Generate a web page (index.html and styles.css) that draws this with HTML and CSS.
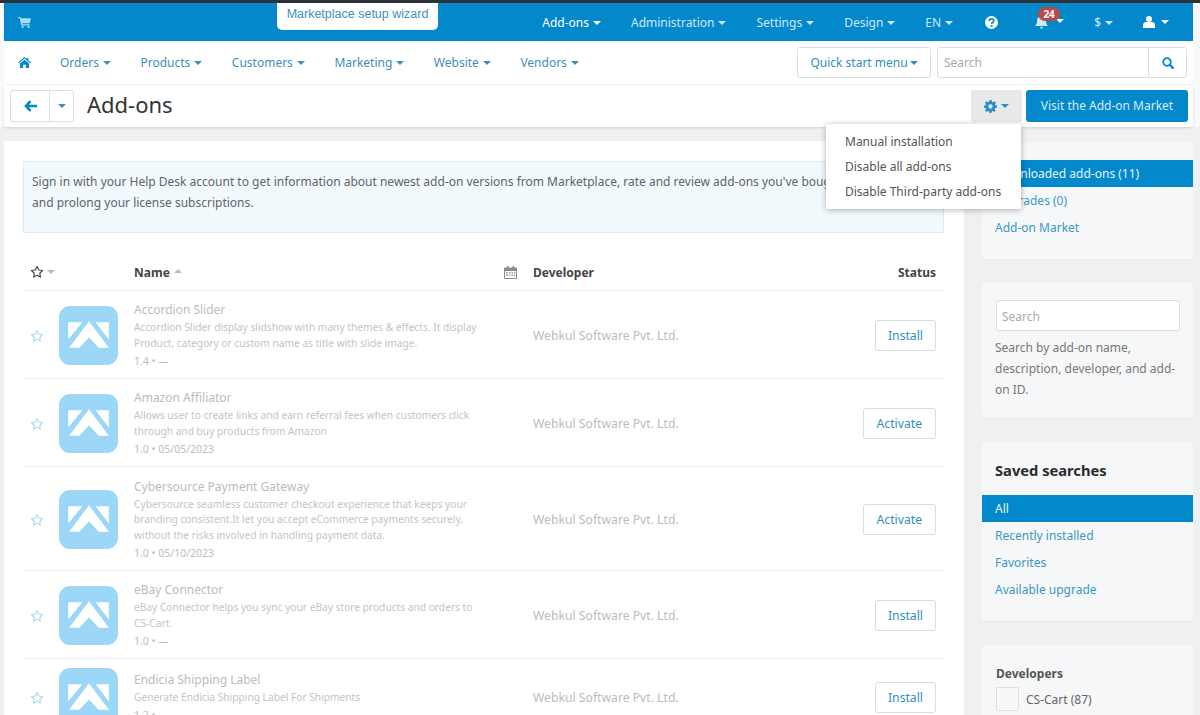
FILE: index.html
```html
<!DOCTYPE html>
<html lang="en">
<head>
<meta charset="utf-8">
<title>Add-ons</title>
<link rel="stylesheet" href="styles.css">
</head>
<body>
<svg class="defs" width="0" height="0" aria-hidden="true">
  <symbol id="logo" viewBox="0 0 58 58">
    <rect width="58" height="58" rx="11" fill="#9dd7f7"/>
    <path fill="#fff" d="M9 16H23L9 33ZM49 16H36L49 33ZM29.500 15L49 41H39L29.500 31L20 41H10Z"/>
  </symbol>
  <symbol id="star" viewBox="0 0 16 16">
    <path fill="none" stroke="currentColor" stroke-width="1.3" stroke-linejoin="round" d="M8 1.6l1.95 4.1 4.45.6-3.25 3.1.8 4.45L8 11.7l-3.95 2.15.8-4.45L1.6 6.3l4.45-.6z"/>
  </symbol>
</svg>

<div class="strip"></div>
<div class="page">
  <header class="topbar">
    <svg class="ic cart" viewBox="0 0 14 12" width="13" height="11"><path fill="currentColor" d="M0 0h2.5l.4 1.4H14l-1.3 5.4H4.4l.3 1.2h8v1.2H3.5L1.7 1.2H0z"/><circle fill="currentColor" cx="5" cy="10.8" r="1.2"/><circle fill="currentColor" cx="11.5" cy="10.8" r="1.2"/></svg>
    <a class="wizard">Marketplace setup wizard</a>
    <nav class="topnav">
      <span class="ti ti-strong caret">Add-ons</span>
      <span class="ti caret">Administration</span>
      <span class="ti caret">Settings</span>
      <span class="ti caret">Design</span>
      <span class="ti caret">EN</span>
      <svg class="ic help" viewBox="0 0 14 14" width="13" height="13"><circle cx="7" cy="7" r="7" fill="currentColor"/><path fill="none" stroke="#0388cc" stroke-width="1.9" d="M4.6 5.4c0-3 4.9-3 4.9-.2 0 1.8-2.4 1.7-2.4 3.4"/><rect x="6.1" y="9.7" width="2" height="2" fill="#0388cc"/></svg>
      <span class="bell-wrap caret">
        <svg class="ic" viewBox="0 0 13 14" width="13" height="14"><path fill="currentColor" d="M6.5 0C7.2 0 7.6.5 7.6 1 10 1.5 11 3.500 11 6c0 2.500.8 3.700 2 5H0c1.200-1.300 2-2.500 2-5 0-2.500 1-4.500 3.400-5C5.400.5 5.800 0 6.500 0zM5 12h3c0 2-3 2-3 0z"/></svg>
        <span class="badge">24</span>
      </span>
      <span class="ti caret">$</span>
      <span class="user caret">
        <svg class="ic" viewBox="0 0 12 12" width="12" height="12"><circle cx="6" cy="3" r="3" fill="currentColor"/><path fill="currentColor" d="M0 12V9c0-2 1.500-3 3-3h6c1.500 0 3 1 3 3v3z"/></svg>
      </span>
    </nav>
  </header>

  <div class="subnav">
    <svg class="ic home" viewBox="0 0 14 12" width="13" height="11"><path fill="currentColor" d="M7 0l2.600 2.200V1H11v2.400L14 6l-.8.9L7 1.700.8 6.900 0 6zM2 7.200L7 3l5 4.200V12H8.500V8.500h-3V12H2z"/></svg>
    <a class="si caret">Orders</a>
    <a class="si caret">Products</a>
    <a class="si caret">Customers</a>
    <a class="si caret">Marketing</a>
    <a class="si caret">Website</a>
    <a class="si caret">Vendors</a>
    <button class="quick caret" type="button">Quick start menu</button>
    <div class="searchbox">
      <span class="searchbox-text">Search</span>
      <span class="searchbox-btn">
        <svg viewBox="0 0 12 12" width="12" height="12"><circle cx="5" cy="5" r="3.800" fill="none" stroke="currentColor" stroke-width="1.800"/><path stroke="currentColor" stroke-width="2.200" stroke-linecap="round" d="M8 8l2.900 2.900"/></svg>
      </span>
    </div>
  </div>

  <div class="titlebar">
    <div class="btngroup">
      <span class="back">
        <svg viewBox="0 0 13 12" width="13" height="12"><path fill="none" stroke="currentColor" stroke-width="2.600" d="M6.500 1.200L2 6l4.500 4.800M2.500 6H13"/></svg>
      </span>
      <span class="back-caret"><i class="tri"></i></span>
    </div>
    <h1 class="title">Add-ons</h1>
    <span class="gear">
      <svg viewBox="0 0 14 14" width="13" height="13"><path fill="currentColor" fill-rule="evenodd" d="M5.800 0h2.400l.3 1.900 1.200.5L11.300 1.300 13 3l-1.100 1.500.5 1.200 1.600.3v2.400l-1.900.3-.5 1.200L12.700 11.300 11 13l-1.500-1.100-1.200.5L8 14H5.800l-.3-1.600-1.200-.5L2.700 13 1 11.300l1.100-1.500-.5-1.200L0 8.300V5.900l1.600-.3.500-1.200L1 3l1.700-1.700 1.600 1.100 1.200-.5zM7 4.700a2.300 2.300 0 1 0 0 4.600 2.300 2.300 0 0 0 0-4.600z"/></svg>
      <i class="tri"></i>
    </span>
    <button class="visit" type="button">Visit the Add-on Market</button>
    <ul class="dropdown">
      <li>Manual installation</li>
      <li>Disable all add-ons</li>
      <li>Disable Third-party add-ons</li>
    </ul>
  </div>

  <div class="content">
    <main class="main">
      <div class="notice">Sign in with your Help Desk account to get information about newest add-on versions from Marketplace, rate and review add-ons you've bought,<br>and prolong your license subscriptions.</div>
      <div class="thead">
        <span class="th-star"><svg class="star-h" width="14" height="14"><use href="#star"/></svg><i class="tri tri-gray"></i></span>
        <span></span>
        <span class="th-name"><b>Name</b><i class="tri-up"></i>
          <svg class="cal" viewBox="0 0 13 13" width="13" height="13"><path fill="#8a8a8a" fill-rule="evenodd" d="M1 1.500h2V0h1.500v1.500h4V0H10v1.500h2a1 1 0 0 1 1 1V12a1 1 0 0 1-1 1H1a1 1 0 0 1-1-1V2.500a1 1 0 0 1 1-1zM1 5v7h11V5z"/><path fill="#a5a5a5" d="M2 6h2v1.500H2zM5 6h1.500v1.500H5zM7.500 6H9v1.500H7.500zM10 6h1.200v1.500H10zM2 8.500h2V10H2zM5 8.500h1.500V10H5zM7.500 8.500H9V10H7.500zM10 8.500h1.200V10H10z"/></svg>
        </span>
        <b>Developer</b>
        <b class="th-status">Status</b>
      </div>

      <div class="row">
        <svg class="star" width="14" height="14"><use href="#star"/></svg>
        <svg class="logo" width="59" height="59"><use href="#logo"/></svg>
        <div class="info">
          <div class="name">Accordion Slider</div>
          <div class="desc">Accordion Slider display slidshow with many themes &amp; effects. It display<br>Product, category or custom name as title with slide image.</div>
          <div class="meta">1.4 • —</div>
        </div>
        <div class="dev">Webkul Software Pvt. Ltd.</div>
        <button class="act" type="button">Install</button>
      </div>

      <div class="row">
        <svg class="star" width="14" height="14"><use href="#star"/></svg>
        <svg class="logo" width="59" height="59"><use href="#logo"/></svg>
        <div class="info">
          <div class="name">Amazon Affiliator</div>
          <div class="desc">Allows user to create links and earn referral fees when customers click<br>through and buy products from Amazon</div>
          <div class="meta">1.0 • 05/05/2023</div>
        </div>
        <div class="dev">Webkul Software Pvt. Ltd.</div>
        <button class="act act-wide" type="button">Activate</button>
      </div>

      <div class="row row-tall">
        <svg class="star" width="14" height="14"><use href="#star"/></svg>
        <svg class="logo" width="59" height="59"><use href="#logo"/></svg>
        <div class="info">
          <div class="name">Cybersource Payment Gateway</div>
          <div class="desc">Cybersource seamless customer checkout experience that keeps your<br>branding consistent.It let you accept eCommerce payments securely,<br>without the risks involved in handling payment data.</div>
          <div class="meta">1.0 • 05/10/2023</div>
        </div>
        <div class="dev">Webkul Software Pvt. Ltd.</div>
        <button class="act act-wide" type="button">Activate</button>
      </div>

      <div class="row">
        <svg class="star" width="14" height="14"><use href="#star"/></svg>
        <svg class="logo" width="59" height="59"><use href="#logo"/></svg>
        <div class="info">
          <div class="name">eBay Connector</div>
          <div class="desc">eBay Connector helps you sync your eBay store products and orders to<br>CS-Cart.</div>
          <div class="meta">1.0 • —</div>
        </div>
        <div class="dev">Webkul Software Pvt. Ltd.</div>
        <button class="act" type="button">Install</button>
      </div>

      <div class="row row-short">
        <svg class="star" width="14" height="14"><use href="#star"/></svg>
        <svg class="logo" width="59" height="59"><use href="#logo"/></svg>
        <div class="info">
          <div class="name">Endicia Shipping Label</div>
          <div class="desc">Generate Endicia Shipping Label For Shipments</div>
          <div class="meta">1.2 • —</div>
        </div>
        <div class="dev">Webkul Software Pvt. Ltd.</div>
        <button class="act" type="button">Install</button>
      </div>
    </main>

    <aside class="side">
      <section class="card card-tabs">
        <a class="li li-active">Downloaded add-ons (11)</a>
        <a class="li">Upgrades (0)</a>
        <a class="li">Add-on Market</a>
      </section>
      <section class="card card-search">
        <div class="side-input">Search</div>
        <p class="side-help">Search by add-on name, description, developer, and add-on ID.</p>
      </section>
      <section class="card card-saved">
        <h2 class="side-h">Saved searches</h2>
        <a class="li li-active">All</a>
        <a class="li">Recently installed</a>
        <a class="li">Favorites</a>
        <a class="li">Available upgrade</a>
      </section>
      <section class="card card-dev">
        <h3 class="side-h3">Developers</h3>
        <label class="check"><span class="box"></span>CS-Cart (87)</label>
      </section>
    </aside>
  </div>
</div>
</body>
</html>
```
FILE: styles.css
```css
* { box-sizing: border-box; }
html, body { margin: 0; padding: 0; height: 715px; overflow: hidden; }
body {
  background: linear-gradient(#f8f9fa 127px, #eef0f2 127px);
  font-family: "Noto Sans", "Open Sans", sans-serif;
  font-size: 12px;
  color: #555;
}
.defs { position: absolute; }
.strip { height: 3px; background: #2c3338; }
.page { margin: 0 7px 0 4px; height: 712px; }
.ic { display: block; flex: none; }
.tri {
  display: inline-block; width: 0; height: 0;
  border-left: 4px solid transparent; border-right: 4px solid transparent;
  border-top: 4px solid currentColor;
}
.tri-gray { color: #bbb; margin-left: 3px; }
.tri-up {
  display: inline-block; width: 0; height: 0; margin-left: 4px; margin-bottom: 2px;
  border-left: 4px solid transparent; border-right: 4px solid transparent;
  border-bottom: 4px solid #bbb;
}
.caret::after {
  content: ""; display: inline-block; width: 0; height: 0; margin-left: 4px; vertical-align: 2px;
  border-left: 4px solid transparent; border-right: 4px solid transparent;
  border-top: 4px solid currentColor;
}

.topbar {
  position: relative; display: flex; align-items: center;
  height: 38px; padding: 0 24px 0 14px; background: #0388cc; color: #cfe9f7;
}
.cart { color: #a9dcf6; }
.wizard {
  position: absolute; left: 273px; top: 0; width: 161px; height: 27px;
  background: #fff; border-radius: 0 0 5px 5px;
  font: 12.500px/23px "Liberation Sans", sans-serif; color: #3f8fc0; text-align: center;
}
.topnav { margin-left: auto; display: flex; align-items: center; gap: 30px; }
.ti { white-space: nowrap; }
.ti-strong { color: #fff; }
.help { color: #fff; margin-left: 2px; margin-right: 7px; }
.bell-wrap { position: relative; display: flex; align-items: center; color: #cfe9f7; }
.bell-wrap::after { margin-left: 8px; margin-top: -2px; color: #fff; }
.badge {
  position: absolute; left: 3px; top: -8px; min-width: 22px; height: 14px; padding: 0 4px;
  background: #b94a48; border-radius: 7px; color: #fff;
  font-size: 10px; font-weight: 700; line-height: 14px; text-align: center;
}
.user { display: flex; align-items: center; color: #fff; }
.user::after { margin-left: 6px; }

.subnav {
  display: flex; align-items: center; height: 44px; padding: 0 6px 0 14px;
  background: #fff; border-bottom: 1px solid #f4f5f6;
}
.home { color: #0388cc; margin-right: 29px; }
.si { color: #3f8fb8; margin-right: 29.500px; white-space: nowrap; }
.si:last-of-type { margin-right: 0; }
.quick {
  margin-left: auto; width: 134px; height: 31px; padding: 0; background: #fff;
  border: 1px solid #dcdfe2; border-radius: 3px; color: #2f8fbd;
  font: inherit; white-space: nowrap;
}
.quick::after { margin-left: 2px; }
.searchbox {
  display: flex; width: 250px; height: 31px; margin-left: 6px;
  border: 1px solid #dcdfe2; border-radius: 3px; background: #fff;
}
.searchbox-text { flex: 1; padding-left: 6px; line-height: 29px; color: #aaa; }
.searchbox-btn {
  width: 38px; display: flex; align-items: center; justify-content: center;
  border-left: 1px solid #dcdfe2; color: #0388cc;
}

.titlebar {
  position: relative; display: flex; align-items: center; height: 42px; padding: 0 5px 0 6px;
  background: #fff; box-shadow: 0 1px 3px rgba(0,0,0,.12); border-radius: 0 0 3px 3px;
}
.btngroup { display: flex; height: 32px; border: 1px solid #dcdfe2; border-radius: 3px; }
.back {
  width: 39px; display: flex; align-items: center; justify-content: center;
  border-right: 1px solid #dcdfe2; color: #0388cc;
}
.back-caret { width: 23px; display: flex; align-items: center; justify-content: center; color: #3f8fb8; }
.title { margin: 0 0 4px 13px; font-size: 22px; font-weight: 400; color: #333; }
.gear {
  margin-left: auto; width: 51px; height: 32px; display: flex; align-items: center; justify-content: center; gap: 4px;
  background: #e8e9ea; border-radius: 2px; color: #2a8fc4;
}
.visit {
  width: 162px; height: 32px; margin-left: 4px; padding: 0 0 2px; border: 0; border-radius: 3px;
  background: #0388cc; color: #d5edf9; font: inherit; white-space: nowrap;
}
.dropdown {
  position: absolute; left: 822px; top: 39px; width: 195px; height: 85px; margin: 0;
  padding: 5px 0 0; list-style: none; background: #fff; border-radius: 2px;
  box-shadow: 0 1px 6px rgba(0,0,0,.3); z-index: 5;
}
.dropdown li { height: 25px; padding-left: 19px; line-height: 25px; color: #555; white-space: nowrap; }

.content { display: flex; gap: 18px; padding-top: 14px; height: 588px; overflow: hidden; background: #eef0f2; }
.main {
  width: 960px; flex: none; padding: 20px 20px 0 19px; background: #fff; border-radius: 3px 3px 0 0; overflow: hidden;
}
.notice {
  height: 72px; padding: 9px 8px; background: #f2fafd; border: 1px solid #d8edf6;
  line-height: 21px; color: #5e6468; white-space: nowrap; overflow: hidden;
}
.thead, .row {
  display: grid; grid-template-columns: 29px 75px 399px 1fr auto; align-items: center;
  padding: 0 8px 0 7px; border-bottom: 1px solid #eceeef;
}
.thead { margin-top: 29px; height: 29px; padding-bottom: 8px; color: #444; }
.thead b { font-weight: 700; }
.th-star { display: flex; align-items: center; color: #444; }
.star-h { color: #444; }
.th-name { display: flex; align-items: center; padding-right: 16px; }
.cal { margin-left: auto; }
.th-status { text-align: right; }
.row { padding-top: 11px; padding-bottom: 9px; height: 88px; }
.row-tall { height: 104px; }
.row-short { height: 76px; padding-top: 9px; padding-bottom: 7px; }
.star { color: #a8dbee; }
.logo { display: block; }
.name { height: 16px; line-height: 16px; font-size: 12px; color: #bcbcbc; white-space: nowrap; }
.desc { margin-top: 2px; font-size: 10.200px; line-height: 15.500px; color: #c4c4c4; white-space: nowrap; }
.meta { margin-top: 2.500px; font-size: 10.500px; line-height: 15px; color: #bcbcbc; }
.dev { color: #bcbcbc; white-space: nowrap; font-size: 12.200px; }
.act {
  height: 31px; padding: 0 12px; background: #fff; border: 1px solid #d8dcdf; border-radius: 3px;
  color: #2f8fbd; font: inherit; font-size: 12.200px;
}
.act-wide { padding: 0 13px; }

.side { width: 211px; flex: none; display: flex; flex-direction: column; gap: 24px; padding-top: 1px; }
.card { background: #f6f7f8; border-radius: 3px; flex: none; box-shadow: 0 1px 1px rgba(0,0,0,.03); }
.card-tabs { height: 117px; padding-top: 18px; }
.li { display: block; height: 27px; padding-left: 13px; line-height: 27px; color: #3b97c4; white-space: nowrap; }
.li-active { width: 213px; background: #0388cc; color: #e6f4fb; }
.card-search { height: 135px; padding: 17px 13px 0 14px; }
.side-input {
  height: 31px; padding-left: 5px; line-height: 31px; background: #fff;
  border: 1px solid #dcdfe2; border-radius: 3px; color: #aaa;
}
.side-help { margin: 6px 0 0 -1px; line-height: 21px; color: #777; }
.card-saved { height: 179px; padding-top: 18px; }
.side-h { margin: 0; padding-left: 13px; height: 35px; font-size: 14.700px; line-height: 20px; font-weight: 700; color: #2b2b2b; }
.card-dev { height: 120px; padding: 21px 14px 0; }
.side-h3 { margin: 0; font-size: 12px; line-height: 16px; font-weight: 700; color: #555; }
.check { display: flex; align-items: center; gap: 7px; margin-top: 5px; color: #666; }
.box { width: 23px; height: 24px; border: 1px solid #dcdfe2; border-radius: 2px; background: #f8f8f8; }
```
